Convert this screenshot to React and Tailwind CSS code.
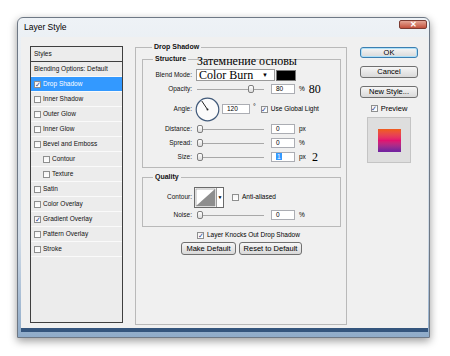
import React from 'react';

const Check = ({ checked = false }) => (
  <span className="inline-flex w-[7px] h-[7px] shrink-0 items-center justify-center border border-[#8e8f8f] bg-linear-to-b from-[#f4f4f4] to-[#ffffff] text-[7px] leading-none text-[#1f3f8f]">
    {checked ? '✓' : ''}
  </span>
);

const Slider = ({ pos = 0 }) => (
  <div className="relative w-[67px] h-[10px] flex items-center">
    <div className="w-full h-px bg-[#a8a8a8]" />
    <div
      className="absolute top-[1px] w-[6px] h-[8px] rounded-[2px] border border-[#7f7f7f] bg-linear-to-b from-[#ffffff] to-[#dcdcdc]"
      style={{ left: pos }}
    />
  </div>
);

const NumBox = ({ value, width = 'w-[24px]', selected = false }) => (
  <div className={`${width} h-[10px] border border-[#abadb3] bg-white pl-[4px] text-[6.5px] leading-[8px] text-black`}>
    {selected ? <span className="bg-[#3399ff] text-white px-[1px]">1</span> : value}
  </div>
);

const Label = ({ children }) => (
  <div className="w-[49px] text-right text-[6.5px] leading-none text-[#111]">{children}</div>
);

const Btn = ({ children, className = '' }) => (
  <div className={`flex items-center justify-center rounded-[3px] border bg-linear-to-b from-[#f6f6f6] to-[#d9d9d9] text-[7.5px] text-black ${className}`}>
    {children}
  </div>
);

const styleItems = [
  { name: 'Drop Shadow', checked: true, selected: true },
  { name: 'Inner Shadow' },
  { name: 'Outer Glow' },
  { name: 'Inner Glow' },
  { name: 'Bevel and Emboss' },
  { name: 'Contour', nested: true },
  { name: 'Texture', nested: true },
  { name: 'Satin' },
  { name: 'Color Overlay' },
  { name: 'Gradient Overlay', checked: true },
  { name: 'Pattern Overlay' },
  { name: 'Stroke' },
];

const Dial = () => (
  <svg width="25" height="25" viewBox="0 0 25 25">
    <circle cx="12.5" cy="12.5" r="11.3" fill="#fbfbfb" stroke="#415a7a" strokeWidth="1.2" />
    <line x1="12.5" y1="12.5" x2="6.8" y2="4" stroke="#222" strokeWidth="1" />
    <circle cx="12.5" cy="12.5" r="1" fill="#222" />
  </svg>
);

export default function App() {
  return (
    <div className="w-[450px] h-[356px] bg-white pl-[17px] pt-[17px] font-['Liberation_Sans',Arial,sans-serif]">
      <div className="w-[413px] h-[321px] flex flex-col rounded-t-[6px] border border-[#6e7885] bg-linear-to-b from-[#eef2f6] via-[#cfdae6] via-[70%] to-[#8fabc9] pl-[3px] pr-[1px] pb-[5px] shadow-[0_3px_9px_rgba(0,0,0,0.4)]">
        {/* title bar */}
        <div className="h-[19px] flex items-start justify-between">
          <span className="pl-[3px] pt-[5px] text-[8.5px] leading-none text-black">Layer Style</span>
          <div className="mt-[2px] mr-[1px] w-[28px] h-[9px] flex items-center justify-center rounded-[2px] border border-[#7c3b31] bg-linear-to-b from-[#e4a595] to-[#c2503c] text-[8px] font-bold leading-none text-white">
            ✕
          </div>
        </div>

        {/* client area */}
        <div className="flex-1 flex items-start bg-[#f0f0f0] border-b-[4px] border-[#34557d]">
          {/* styles list */}
          <div className="mt-[9px] ml-[9px] w-[93px] h-[277px] border border-[#3f3f3f] bg-[#ececec] text-[6.5px] leading-none text-[#111]">
            <div className="h-[15px] flex items-center pl-[3px] border-b border-[#3f3f3f]">Styles</div>
            <div className="h-[15px] flex items-center pl-[3px] border-b border-[#fafafa]">Blending Options: Default</div>
            {styleItems.map((it) => (
              <div
                key={it.name}
                className={`h-[15px] flex items-center gap-[2px] border-b border-[#fafafa] ${it.nested ? 'pl-[12px]' : 'pl-[3px]'} ${it.selected ? 'bg-[#3399ff] text-white' : ''}`}
              >
                <Check checked={it.checked} />
                <span>{it.name}</span>
              </div>
            ))}
          </div>

          {/* main group */}
          <fieldset className="ml-[12px] mt-[5px] w-[212px] h-[283px] border border-[#b9b9b9] pl-[6px] pr-[5px]">
            <legend className="ml-[10px] px-[2px] text-[7px] leading-[10px] font-bold text-[#111]">Drop Shadow</legend>

            <fieldset className="relative mt-[2px] h-[114px] border border-[#b9b9b9] pt-[4px]">
              <legend className="ml-[10px] px-[2px] text-[7px] leading-[10px] font-bold text-[#111]">Structure</legend>
              <span className="absolute left-[54px] top-[-8px] text-[12px] leading-[10px] font-['Liberation_Serif',serif] text-black">
                Затемнение основы
              </span>

              <div className="h-[14px] flex items-center">
                <Label>Blend Mode:</Label>
                <div className="ml-[4px] w-[79px] h-[12px] flex items-center justify-between border border-[#9a9a9a] bg-white pl-[2px] pr-[6px]">
                  <span className="text-[12px] leading-[10px] font-['Liberation_Serif',serif] text-black">Color Burn</span>
                  <span className="text-[6px] leading-none text-black">▼</span>
                </div>
                <div className="ml-[1px] w-[20px] h-[11px] border border-[#777] bg-black" />
              </div>

              <div className="h-[14px] flex items-center">
                <Label>Opacity:</Label>
                <div className="ml-[5px]"><Slider pos={51} /></div>
                <div className="ml-[7px]"><NumBox value="80" /></div>
                <span className="ml-[4px] text-[6.5px] leading-none">%</span>
                <span className="ml-[4px] text-[12px] leading-none font-['Liberation_Serif',serif] text-black">80</span>
              </div>

              <div className="h-[26px] flex items-center">
                <Label>Angle:</Label>
                <div className="ml-[3px]"><Dial /></div>
                <div className="ml-[2px]"><NumBox value="120" width="w-[28px]" /></div>
                <span className="ml-[3px] text-[7px] leading-none self-start mt-[7px]">°</span>
                <div className="ml-[5px] flex items-center gap-[3px]">
                  <Check checked />
                  <span className="text-[6.5px] leading-none">Use Global Light</span>
                </div>
              </div>

              {[
                ['Distance:', 'px'],
                ['Spread:', '%'],
                ['Size:', 'px'],
              ].map(([label, unit], i) => (
                <div key={label} className="h-[14px] flex items-center">
                  <Label>{label}</Label>
                  <div className="ml-[5px]"><Slider pos={0} /></div>
                  <div className="ml-[7px]"><NumBox value="0" selected={i === 2} /></div>
                  <span className="ml-[4px] text-[6.5px] leading-none">{unit}</span>
                  {i === 2 && (
                    <span className="ml-[6px] text-[12px] leading-none font-['Liberation_Serif',serif] text-black">2</span>
                  )}
                </div>
              ))}
            </fieldset>

            <fieldset className="mt-[4px] h-[55px] border border-[#b9b9b9] pt-[4px]">
              <legend className="ml-[10px] px-[2px] text-[7px] leading-[10px] font-bold text-[#111]">Quality</legend>
              <div className="h-[22px] flex items-center">
                <Label>Contour:</Label>
                <div className="ml-[2px] h-[21px] flex border border-[#6a6a6a] bg-white">
                  <svg width="21" height="19" viewBox="0 0 21 19">
                    <rect x="1" y="1" width="19" height="17" fill="#fff" stroke="#888" strokeWidth="0.6" />
                    <polygon points="1,18 20,1 20,18" fill="#8e8e8e" />
                  </svg>
                  <div className="w-[7px] flex items-center justify-center border-l border-[#9a9a9a] text-[5px] leading-none">▼</div>
                </div>
                <div className="ml-[8px] flex items-center gap-[3px]">
                  <Check />
                  <span className="text-[6.5px] leading-none">Anti-aliased</span>
                </div>
              </div>
              <div className="h-[14px] flex items-center">
                <Label>Noise:</Label>
                <div className="ml-[5px]"><Slider pos={0} /></div>
                <div className="ml-[7px]"><NumBox value="0" /></div>
                <span className="ml-[4px] text-[6.5px] leading-none">%</span>
              </div>
            </fieldset>

            <div className="mt-[3px] h-[10px] flex items-center pl-[55px] gap-[3px]">
              <Check checked />
              <span className="text-[6.5px] leading-none">Layer Knocks Out Drop Shadow</span>
            </div>
            <div className="mt-[2px] flex pl-[39px] gap-[3px]">
              <Btn className="w-[55px] h-[13px] border-[#707070]">Make Default</Btn>
              <Btn className="w-[63px] h-[13px] border-[#707070]">Reset to Default</Btn>
            </div>
          </fieldset>

          {/* right column */}
          <div className="ml-[13px] w-[58px] flex flex-col items-center">
            <Btn className="mt-[10px] w-[58px] h-[11px] border-[#3c7fb1] shadow-[inset_0_0_0_1px_#aee0f8]">OK</Btn>
            <Btn className="mt-[8px] w-[58px] h-[12px] border-[#707070]">Cancel</Btn>
            <Btn className="mt-[8px] w-[58px] h-[12px] border-[#707070]">New Style...</Btn>
            <div className="mt-[6px] h-[9px] flex items-center gap-[3px]">
              <Check checked />
              <span className="text-[7.5px] leading-none">Preview</span>
            </div>
            <div className="mt-[4px] w-[44px] h-[46px] flex items-center justify-center border border-[#c4c4c4] bg-[#dedede]">
              <div className="w-[23px] h-[23px] bg-linear-to-b from-[#ee5a22] from-[5%] via-[#e21170] via-[50%] to-[#74229e] to-[95%]" />
            </div>
          </div>
        </div>
      </div>
    </div>
  );
}
